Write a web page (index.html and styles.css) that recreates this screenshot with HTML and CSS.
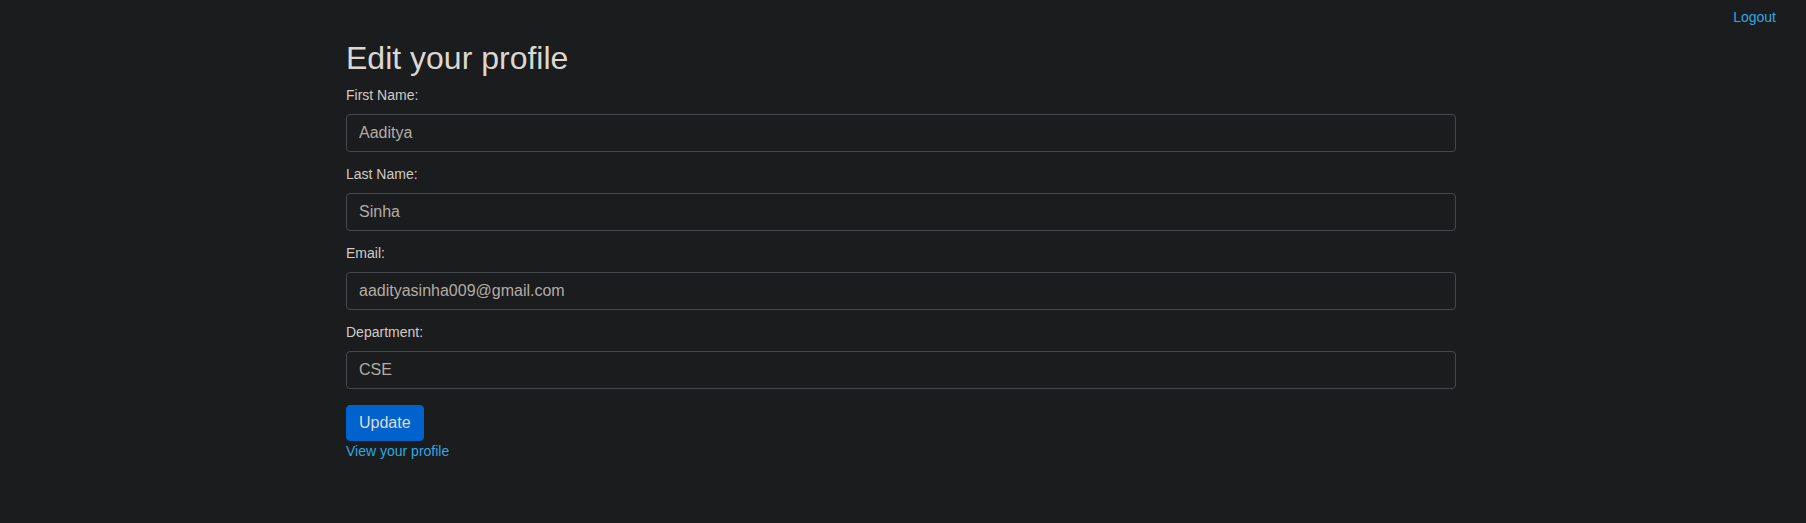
FILE: index.html
```html
<!DOCTYPE html>
<html lang="en">
<head>
<meta charset="utf-8">
<title>Edit your profile</title>
<link rel="stylesheet" href="styles.css">
</head>
<body>
<header class="topbar">
  <a class="link" href="#">Logout</a>
</header>
<main class="container">
  <h2 class="title">Edit your profile</h2>
  <form class="form">
    <div class="group">
      <label class="label" for="fn">First Name:</label>
      <input class="input" id="fn" type="text" value="Aaditya">
    </div>
    <div class="group">
      <label class="label" for="ln">Last Name:</label>
      <input class="input" id="ln" type="text" value="Sinha">
    </div>
    <div class="group">
      <label class="label" for="em">Email:</label>
      <input class="input" id="em" type="text" value="aadityasinha009@gmail.com">
    </div>
    <div class="group">
      <label class="label" for="dp">Department:</label>
      <input class="input" id="dp" type="text" value="CSE">
    </div>
    <div class="actions">
      <button class="btn" type="button">Update</button>
    </div>
  </form>
  <a class="link" href="#">View your profile</a>
</main>
</body>
</html>
```

FILE: styles.css
```css
html, body {
  margin: 0;
  padding: 0;
  background: #1b1c1e;
  height: 100%;
}
body {
  font-family: "Liberation Sans", Arial, Helvetica, sans-serif;
  color: #e8e6e3;
  font-size: 16px;
  line-height: 1.5;
}
.topbar {
  display: flex;
  justify-content: flex-end;
  padding: 7px 30px 0 0;
}
.link {
  color: #30a8e2;
  text-decoration: none;
  font-size: 14px;
  line-height: 21px;
}
.container {
  width: 1110px;
  margin: 0 0 0 calc(50% - 557px);
  display: flex;
  flex-direction: column;
  align-items: flex-start;
}
.title {
  margin: 11px 0 8px;
  font-size: 32px;
  font-weight: 400;
  line-height: 1.2;
  color: #dbd7d1;
}
.form {
  width: 100%;
  display: flex;
  flex-direction: column;
}
.group {
  display: flex;
  flex-direction: column;
  margin-bottom: 12px;
}
.label {
  font-size: 14px;
  line-height: 21px;
  margin-bottom: 8px;
  color: #cfcbc5;
}
.input {
  box-sizing: border-box;
  width: 100%;
  height: 38px;
  padding: 6px 12px;
  font-family: inherit;
  font-size: 16px;
  line-height: 24px;
  color: #b2aca2;
  background: #1b1c1e;
  border: 1px solid #44484c;
  border-radius: 4px;
  outline: none;
}
.actions {
  margin-top: 4px;
  display: flex;
}
.btn {
  box-sizing: border-box;
  height: 36px;
  padding: 5px 12px;
  font-family: inherit;
  font-size: 16px;
  line-height: 24px;
  color: #dedbd7;
  background: #0062cc;
  border: 1px solid #0062cc;
  border-radius: 4px;
  cursor: pointer;
}
```
